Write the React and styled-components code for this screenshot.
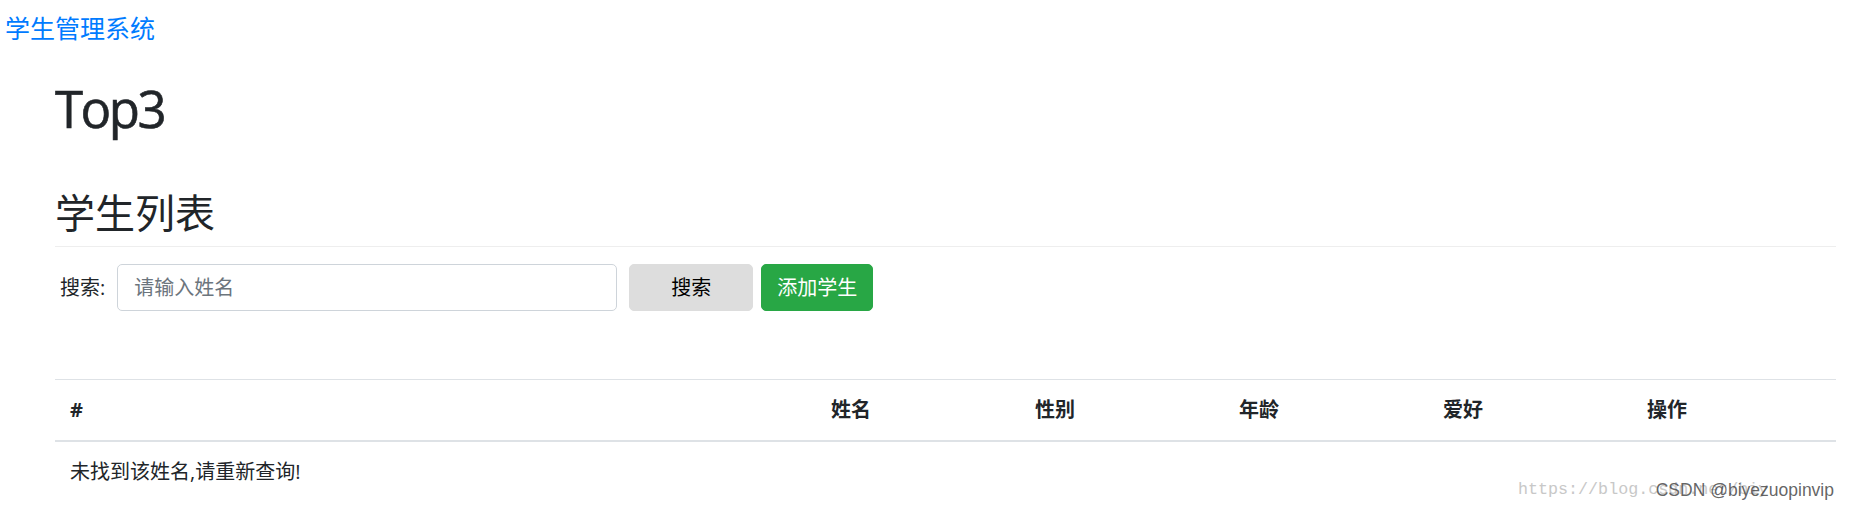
import styled, { createGlobalStyle } from "styled-components";

const GlobalStyle = createGlobalStyle`
  body {
    margin: 0;
    font-family: "Open Sans", "Noto Sans CJK SC", sans-serif;
    color: #212529;
    background: #fff;
  }
`;

const columns = [
  { title: "#", width: null },
  { title: "姓名", width: 204 },
  { title: "性别", width: 204 },
  { title: "年龄", width: 204 },
  { title: "爱好", width: 204 },
  { title: "操作", width: 204 },
];

function App() {
  return (
    <>
      <GlobalStyle />
      <Page>
        <Navbar>
          <Brand href="#">学生管理系统</Brand>
        </Navbar>
        <Main>
          <Title>Top3</Title>
          <SectionHead>学生列表</SectionHead>
          <SearchForm>
            <Label>搜索:</Label>
            <SearchInput placeholder="请输入姓名" />
            <Button>搜索</Button>
            <Button $variant="success">添加学生</Button>
          </SearchForm>
          <Table>
            <thead>
              <tr>
                {columns.map((c) => (
                  <Th key={c.title} $width={c.width}>
                    {c.title}
                  </Th>
                ))}
              </tr>
            </thead>
            <tbody>
              <tr>
                <Td colSpan={6}>未找到该姓名,请重新查询!</Td>
              </tr>
            </tbody>
          </Table>
        </Main>
        <Watermark>
          <WatermarkUrl>https://blog.csdn.net/biy</WatermarkUrl>
          <WatermarkTag>CSDN @biyezuopinvip</WatermarkTag>
        </Watermark>
      </Page>
    </>
  );
}

const Page = styled.div`
  position: relative;
  width: 1850px;
  height: 508px;
  overflow: hidden;
`;

const Navbar = styled.nav`
  display: flex;
  align-items: center;
  height: 37px;
  padding: 10px 5px;
`;

const Brand = styled.a`
  font-size: 25px;
  line-height: 37px;
  color: #007bff;
  text-decoration: none;
`;

const Main = styled.main`
  padding: 0 14px 0 55px;
`;

const Title = styled.h1`
  margin: 21px 0 0;
  font-size: 51px;
  font-weight: 500;
  letter-spacing: -2.5px;
  line-height: 60px;
  -webkit-text-stroke: 0.6px #212529;
`;

const SectionHead = styled.h2`
  margin: 51px 0 0;
  padding-bottom: 9px;
  border-bottom: 1px solid #eee;
  font-size: 40px;
  font-weight: 400;
  line-height: 48px;
`;

const SearchForm = styled.div`
  display: flex;
  align-items: center;
  margin-top: 17px;
  height: 47px;
`;

const Label = styled.label`
  font-size: 20px;
  padding-left: 5px;
  margin-right: 12px;
  line-height: 30px;
`;

const SearchInput = styled.input`
  box-sizing: border-box;
  width: 500px;
  height: 47px;
  padding: 0 16px;
  border: 1px solid #ced4da;
  border-radius: 5px;
  font-family: inherit;
  font-size: 20px;
  color: #495057;
  outline: none;
  margin-right: 12px;
  &::placeholder {
    color: #6c757d;
  }
`;

const Button = styled.button`
  box-sizing: border-box;
  height: 47px;
  width: ${(p) => (p.$variant === "success" ? "112px" : "124px")};
  margin-right: 8px;
  padding: 0;
  border: 1px solid ${(p) => (p.$variant === "success" ? "#28a745" : "#ddd")};
  border-radius: 5px;
  background: ${(p) => (p.$variant === "success" ? "#28a745" : "#ddd")};
  color: ${(p) => (p.$variant === "success" ? "#fff" : "#000")};
  font-family: inherit;
  font-size: 20px;
  line-height: 30px;
`;

const Table = styled.table`
  width: 1781px;
  margin-top: 68px;
  border-collapse: collapse;
  table-layout: fixed;
  font-size: 20px;
`;

const Th = styled.th`
  box-sizing: border-box;
  width: ${(p) => (p.$width ? `${p.$width}px` : "auto")};
  padding: 15px;
  line-height: 30px;
  text-align: left;
  font-weight: 700;
  border-top: 1px solid #dee2e6;
  border-bottom: 2px solid #dee2e6;
`;

const Td = styled.td`
  padding: 15px;
  line-height: 30px;
`;

const Watermark = styled.div`
  position: absolute;
  left: 1518px;
  top: 478px;
  width: 318px;
  height: 24px;
`;

const WatermarkUrl = styled.span`
  display: block;
  white-space: nowrap;
  font-family: "Liberation Mono", monospace;
  font-size: 16.7px;
  line-height: 24px;
  color: #c8c8c8;
`;

const WatermarkTag = styled.span`
  position: absolute;
  right: 2px;
  top: 0;
  font-family: "Liberation Sans", sans-serif;
  font-size: 17.5px;
  line-height: 24px;
  color: rgba(60, 60, 60, 0.8);
  white-space: nowrap;
`;

export default App;
